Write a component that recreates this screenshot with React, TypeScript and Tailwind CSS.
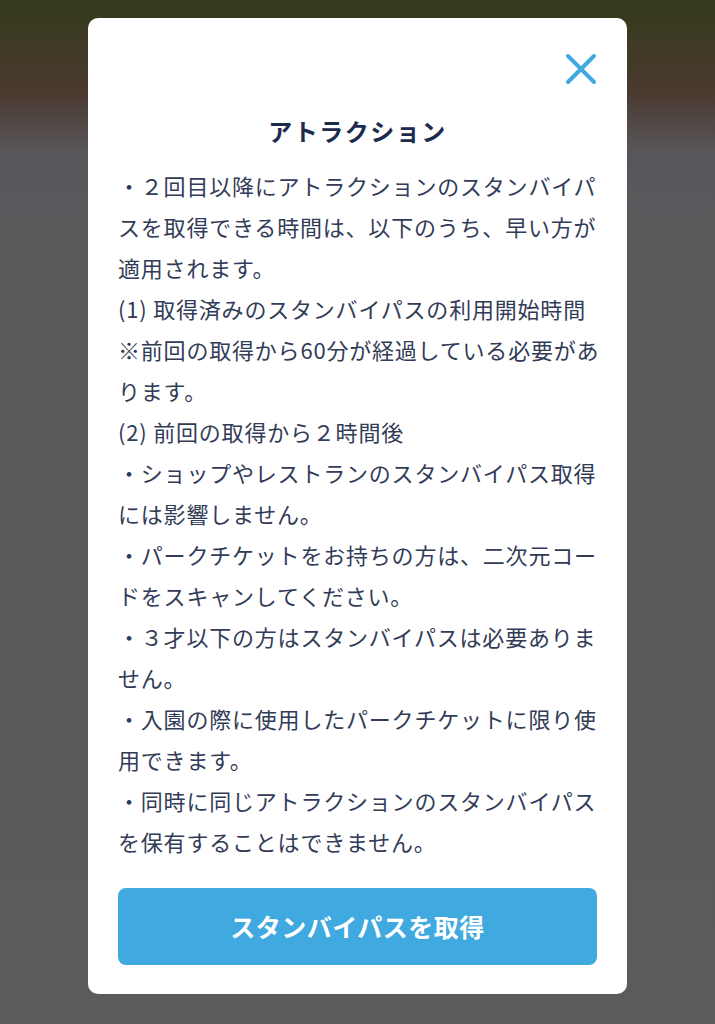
import React from 'react';

// 各段落を表示行ごとに分けて持つ
const notes: string[][] = [
  ['・２回目以降にアトラクションのスタンバイパ', 'スを取得できる時間は、以下のうち、早い方が', '適用されます。'],
  ['(1) 取得済みのスタンバイパスの利用開始時間'],
  ['※前回の取得から60分が経過している必要があ', 'ります。'],
  ['(2) 前回の取得から２時間後'],
  ['・ショップやレストランのスタンバイパス取得', 'には影響しません。'],
  ['・パークチケットをお持ちの方は、二次元コー', 'ドをスキャンしてください。'],
  ['・３才以下の方はスタンバイパスは必要ありま', 'せん。'],
  ['・入園の際に使用したパークチケットに限り使', '用できます。'],
  ['・同時に同じアトラクションのスタンバイパス', 'を保有することはできません。'],
];

function CloseIcon() {
  return (
    <svg width="32" height="32" viewBox="0 0 32 32" fill="none">
      <path d="M3 3L29 29M29 3L3 29" stroke="#3fa9e0" strokeWidth="4" strokeLinecap="round" />
    </svg>
  );
}

function App() {
  return (
    <div
      className="h-[1024px] w-full overflow-hidden pt-[18px] bg-[linear-gradient(180deg,#333a1b_0%,#413a26_5%,#4a3a30_9%,#58565a_15%,#5a595c_22%,#5b5a5d_100%)]"
      style={{ fontFamily: '"Noto Sans CJK JP", "Noto Sans", sans-serif' }}
    >
      <div className="mx-auto ml-[88px] w-[539px] rounded-[10px] bg-white px-[30px] pt-[35px] pb-[29px]">
        <div className="flex justify-end pr-[-1px]">
          <button className="h-[32px] w-[32px]">
            <CloseIcon />
          </button>
        </div>
        <h2 className="mt-[30px] text-center text-[24px] font-bold leading-[32px] tracking-[1.5px] text-[#1d2c4c]">
          アトラクション
        </h2>
        <div className="mt-[18px] text-[22px] leading-[41px] tracking-[0.8px] text-[#323c57]">
          {notes.map((lines, i) => (
            <p key={i}>
              {lines.map((line, j) => (
                <span key={j} className="block whitespace-nowrap">
                  {line}
                </span>
              ))}
            </p>
          ))}
        </div>
        <button className="mt-[26px] flex h-[77px] w-full items-center justify-center rounded-[8px] bg-[#3fa9e0] text-[25px] font-bold tracking-[0.5px] text-white">
          スタンバイパスを取得
        </button>
      </div>
    </div>
  );
}

export default App;
